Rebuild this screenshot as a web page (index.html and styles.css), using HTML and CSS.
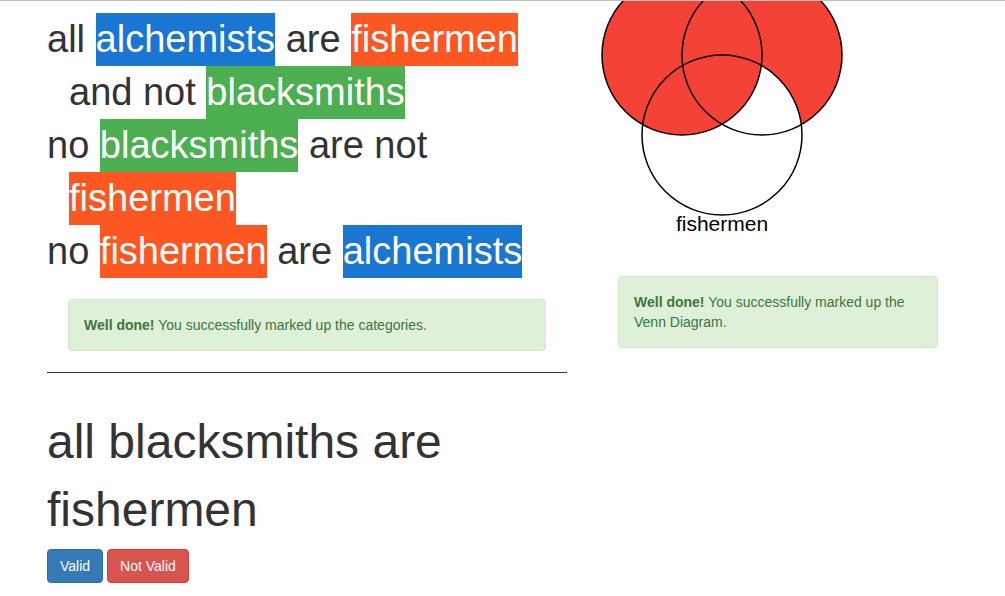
FILE: index.html
```html
<!DOCTYPE html>
<html lang="en">
<head>
<meta charset="utf-8">
<title>Syllogism</title>
<link rel="stylesheet" href="styles.css">
</head>
<body>
<main class="page">
  <section class="argument">
    <div class="premises">
      <p class="premise">all <span class="term term-blue">alchemists</span> are <span class="term term-orange">fishermen</span> and not <span class="term term-green">blacksmiths</span></p>
      <p class="premise">no <span class="term term-green">blacksmiths</span> are not <span class="term term-orange">fishermen</span></p>
      <p class="premise">no <span class="term term-orange">fishermen</span> are <span class="term term-blue">alchemists</span></p>
    </div>
    <div class="alert alert-categories" role="status"><strong>Well done!</strong> You successfully marked up the categories.</div>
    <hr class="rule">
    <h1 class="conclusion">all blacksmiths are fishermen</h1>
    <div class="actions">
      <button type="button" class="btn btn-primary">Valid</button>
      <button type="button" class="btn btn-danger">Not Valid</button>
    </div>
  </section>
  <section class="diagram">
    <svg class="venn" width="320" height="240" viewBox="0 0 320 240" role="img" aria-label="Venn diagram">
      <defs>
        <mask id="outside-fishermen" maskUnits="userSpaceOnUse" x="-20" y="-60" width="360" height="320">
          <rect x="-20" y="-60" width="360" height="320" fill="#fff"/>
          <circle cx="124" cy="134" r="80" fill="#000"/>
        </mask>
      </defs>
      <circle cx="164" cy="54" r="80" fill="#f44336" mask="url(#outside-fishermen)"/>
      <circle cx="84" cy="54" r="80" fill="#f44336"/>
      <g fill="none" stroke="#000" stroke-width="1.5">
        <circle cx="84" cy="54" r="80"/>
        <circle cx="164" cy="54" r="80"/>
        <circle cx="124" cy="134" r="80"/>
      </g>
      <text class="venn-label" x="124" y="230" text-anchor="middle">fishermen</text>
    </svg>
    <div class="alert alert-venn" role="status"><strong>Well done!</strong> You successfully marked up the Venn Diagram.</div>
  </section>
</main>
</body>
</html>
```
FILE: styles.css
```css
* { box-sizing: border-box; }
body {
  margin: 0;
  color: #333;
  background: #fff;
  font: 14px/20px "Liberation Sans", Arial, sans-serif;
}
.page {
  display: grid;
  grid-template-columns: minmax(0, 520px) minmax(0, 360px);
  gap: 31px;
  padding: 0 47px;
  border-top: 1px solid #c0c0c0;
}
.premises { padding-top: 12px; }
.premise {
  margin: 0;
  padding-left: 22px;
  text-indent: -22px;
  font-size: 38px;
  line-height: 53px;
}
.term {
  display: inline-block;
  text-indent: 0;
  color: #fff;
}
.term-blue { background: #1976d2; }
.term-orange { background: #ff5722; }
.term-green { background: #4caf50; }
.alert {
  padding: 15px;
  border: 1px solid #d6e9c6;
  border-radius: 4px;
  color: #3c763d;
  background: #dff0d8;
}
.alert-categories { margin: 21px 21px 0; }
.rule {
  margin: 21px 0 0;
  border: 0;
  border-top: 1px solid #333;
}
.conclusion {
  margin: 35px 0 5px;
  font-size: 48px;
  font-weight: 400;
  line-height: 68px;
}
.actions { display: flex; gap: 4px; }
.btn {
  padding: 6px 12px;
  border: 1px solid;
  border-radius: 4px;
  color: #fff;
  font: inherit;
  cursor: pointer;
}
.btn-primary { background: #337ab7; border-color: #2e6da4; }
.btn-danger { background: #d9534f; border-color: #d43f3a; }
.venn { display: block; overflow: hidden; }
.venn-label { font-size: 21px; fill: #000; }
.alert-venn { margin: 35px 20px 0; }
```
